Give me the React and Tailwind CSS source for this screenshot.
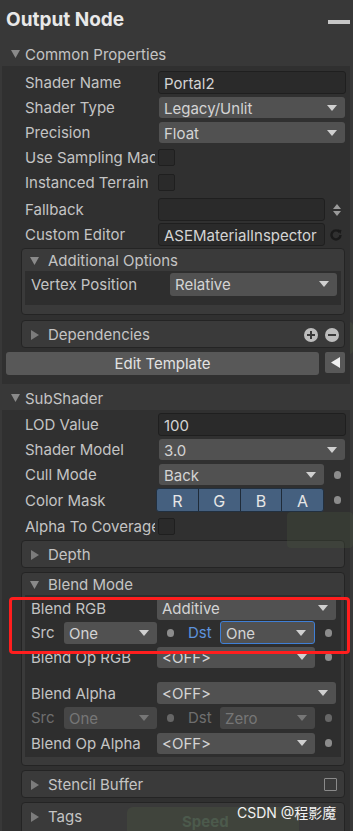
import React from "react";

const Tri = ({ dir = "down", className = "" }) => {
  if (dir === "down")
    return (
      <svg width="9" height="8" viewBox="0 0 9 8" className={className}>
        <path d="M0 0 H9 L4.5 8 Z" fill="#8a8a8a" />
      </svg>
    );
  return (
    <svg width="8" height="10" viewBox="0 0 8 10" className={className}>
      <path d="M0 0 L8 5 L0 10 Z" fill="#7c7c7c" />
    </svg>
  );
};

const Caret = ({ dim }) => (
  <svg width="10" height="6" viewBox="0 0 10 6" className="shrink-0">
    <path d="M0 0 H10 L5 6 Z" fill={dim ? "#777" : "#d0d0d0"} />
  </svg>
);

const Dot = ({ className = "" }) => (
  <div className={"h-[8px] w-[7px] rounded-full bg-[#8c8c8c] " + className} />
);

const Dropdown = ({ value, className = "", dim = false, focus = false }) => (
  <div
    className={
      "flex items-center justify-between rounded-[3px] pl-[5px] pr-[8px] " +
      (dim ? "bg-[#464646] text-[#767676] " : "bg-[#515151] text-[#d4d4d4] ") +
      (focus ? "border border-[#3f7fd6] pl-[4px] " : "") +
      className
    }
  >
    <span className="pt-[1px] leading-none">{value}</span>
    <Caret dim={dim} />
  </div>
);

const Input = ({ value = "", className = "" }) => (
  <div
    className={
      "flex items-center rounded-[3px] border border-[#1f1f1f] bg-[#2a2a2a] pl-[5px] text-[#d4d4d4] " +
      className
    }
  >
    <span className="pt-[2px] leading-none">{value}</span>
  </div>
);

const Check = () => (
  <div className="h-[17px] w-[17px] rounded-[2px] border border-[#1f1f1f] bg-[#2a2a2a]" />
);

const Row = ({ label, children, h = "h-[25px]" }) => (
  <div className={"flex items-center pl-[23px] " + h}>
    <div className="w-[130px] shrink-0 overflow-hidden whitespace-nowrap pt-[2px]">{label}</div>
    <div className="ml-[3px] flex items-center">{children}</div>
  </div>
);

const BRow = ({ label, children, h = "h-[24px]", lw = "w-[126px]", dim = false }) => (
  <div className={"flex items-center pl-[6px] " + h}>
    <div className={lw + " shrink-0 whitespace-nowrap pt-[2px] " + (dim ? "text-[#6e6e6e]" : "")}>
      {label}
    </div>
    {children}
  </div>
);

const Box = ({ title, open = false, children, className = "", right = null }) => (
  <div
    className={
      "ml-[19px] w-[324px] rounded-[4px] border border-[#242424] bg-[#3a3a3a] " + className
    }
  >
    <div className={"flex items-center pl-[8px] " + (open ? "h-[22px]" : "h-[26px]")}>
      {open ? <Tri dir="down" className="mt-[1px]" /> : <Tri dir="right" className="ml-[1px] mt-[1px]" />}
      <span className="ml-[9px] pt-[3px]">{title}</span>
      {right}
    </div>
    {children}
  </div>
);

export default function App() {
  return (
    <div className="relative h-[831px] w-[353px] overflow-hidden bg-[#383838] font-['Inter','Noto_Sans_CJK_SC',sans-serif] text-[15px] text-[#c4c4c4]">
      {/* faint graph behind */}
      <div className="absolute left-[292px] top-[322px] h-[32px] w-[61px] rounded-[4px] bg-[#4a5640] opacity-40" />
      <div className="absolute left-[287px] top-[512px] h-[36px] w-[66px] rounded-[4px] bg-[#4a5640] opacity-30" />
      <div className="absolute left-[127px] top-[807px] h-[30px] w-[172px] rounded-[6px] bg-[#4a5640] opacity-40" />

      {/* header */}
      <div className="flex h-[40px] items-center justify-between pl-[6px] pr-[3px]">
        <span className="pt-[1px] text-[19px] font-bold text-[#e8e8e8]">Output Node</span>
        <div className="mt-[4px] h-[4px] w-[22px] bg-[#c6c6c6]" />
      </div>

      <div className="flex h-[26px] items-center pl-[11px]">
        <Tri dir="down" className="mt-[2px]" />
        <span className="ml-[5px] pt-[4px]">Common Properties</span>
      </div>

      {/* common section */}
      <div className="relative ml-[2px] mr-[3px] bg-[#303030] pb-[9px] pt-[4px]">
        <Row label="Shader Name">
          <Input value="Portal2" className="h-[23px] w-[188px]" />
        </Row>
        <Row label="Shader Type">
          <Dropdown value="Legacy/Unlit" className="ml-[1px] h-[21px] w-[186px]" />
        </Row>
        <Row label="Precision">
          <Dropdown value="Float" className="ml-[1px] h-[21px] w-[186px]" />
        </Row>
        <Row label="Use Sampling Macros">
          <Check />
        </Row>
        <Row label="Instanced Terrain">
          <Check />
        </Row>
        <div className="h-[2px]" />
        <Row label="Fallback">
          <Input className="h-[23px] w-[167px]" />
          <svg width="8" height="12" viewBox="0 0 8 12" className="ml-[8px]">
            <path d="M0 5 L4 0 L8 5 Z M0 7 L4 12 L8 7 Z" fill="#9a9a9a" />
          </svg>
        </Row>
        <Row label="Custom Editor">
          <Input value="ASEMaterialInspector" className="h-[23px] w-[167px]" />
          <svg width="12" height="12" viewBox="0 0 12 12" className="ml-[5px]">
            <path d="M9.6 3.2 A4.5 4.5 0 1 0 10.5 6" fill="none" stroke="#1a1a1a" strokeWidth="2.4" />
            <path d="M7.5 0.5 L11.5 1 L10.5 5 Z" fill="#1a1a1a" />
          </svg>
        </Row>

        <Box title="Additional Options" open className="mt-[1px] pb-[9px]">
          <div className="mx-[3px] bg-[#2e2e2e] pb-[9px] pt-[1px]">
            <BRow label="Vertex Position" lw="w-[139px]" h="h-[24px]">
              <Dropdown value="Relative" className="h-[23px] w-[167px]" />
            </BRow>
          </div>
        </Box>

        <Box
          title="Dependencies"
          className="mt-[5px]"
          right={
            <div className="ml-auto mr-[5px] mt-[2px] flex gap-[7px]">
              <div className="relative h-[14px] w-[14px] rounded-full bg-[#bdbdbd]">
                <div className="absolute left-[3px] top-[6px] h-[2px] w-[8px] bg-[#3a3a3a]" />
                <div className="absolute left-[6px] top-[3px] h-[8px] w-[2px] bg-[#3a3a3a]" />
              </div>
              <div className="relative h-[14px] w-[14px] rounded-full bg-[#bdbdbd]">
                <div className="absolute left-[3px] top-[6px] h-[2px] w-[8px] bg-[#3a3a3a]" />
              </div>
            </div>
          }
        />

        <div className="ml-[4px] mt-[4px] flex items-start">
          <div className="flex h-[23px] w-[313px] items-center justify-center rounded-[3px] bg-[#585858] pt-[2px] text-[#e2e2e2]">
            Edit Template
          </div>
          <div className="ml-[6px] flex h-[21px] w-[20px] items-center justify-center rounded-[2px] bg-[#585858]">
            <svg width="9" height="11" viewBox="0 0 9 11">
              <path d="M9 0 V11 L0 5.5 Z" fill="#f0f0f0" />
            </svg>
          </div>
        </div>
      </div>

      <div className="flex h-[26px] items-center pl-[11px]">
        <Tri dir="down" className="mt-[2px]" />
        <span className="ml-[5px] pt-[4px]">SubShader</span>
      </div>

      {/* subshader section */}
      <div className="ml-[2px] mr-[3px] bg-[#303030] pt-[2px]">
        <Row label="LOD Value">
          <Input value="100" className="h-[23px] w-[188px]" />
        </Row>
        <Row label="Shader Model">
          <Dropdown value="3.0" className="ml-[1px] h-[21px] w-[186px]" />
        </Row>
        <Row label="Cull Mode">
          <Dropdown value="Back" className="ml-[1px] h-[21px] w-[165px]" />
          <Dot className="ml-[10px]" />
        </Row>
        <Row label="Color Mask" h="h-[26px]">
          <div className="-ml-[2px] flex h-[24px] w-[168px] overflow-hidden rounded-[3px] border border-[#22303f] bg-[#45607f] text-[16px] text-[#e6e6e6]">
            <div className="flex flex-1 items-center justify-center border-r border-[#1f2b38] pt-[2px]">R</div>
            <div className="flex flex-1 items-center justify-center border-r border-[#1f2b38] pt-[2px]">G</div>
            <div className="flex flex-1 items-center justify-center border-r border-[#1f2b38] pt-[2px]">B</div>
            <div className="flex flex-1 items-center justify-center pt-[2px]">A</div>
          </div>
          <Dot className="ml-[10px]" />
        </Row>
        <Row label="Alpha To Coverage" h="h-[26px]">
          <Check />
        </Row>

        <Box title="Depth" className="mt-[1px]" />

        <Box title="Blend Mode" open className="mt-[4px] pb-[8px]">
          <div className="mx-[3px] bg-[#2e2e2e] pb-[1px] pt-[1px]">
            <BRow label="Blend RGB">
              <Dropdown value="Additive" className="h-[23px] w-[179px]" />
            </BRow>
            <BRow label="Src" lw="w-[33px]" h="h-[25px]">
              <Dropdown value="One" className="h-[22px] w-[93px]" />
              <Dot className="ml-[10px]" />
              <span className="ml-[14px] w-[32px] pt-[2px] text-[#5d92dc]">Dst</span>
              <Dropdown value="One" focus className="h-[23px] w-[95px]" />
              <Dot className="ml-[10px]" />
            </BRow>
            <BRow label="Blend Op RGB">
              <Dropdown value="<OFF>" className="h-[21px] w-[158px]" />
              <Dot className="ml-[10px]" />
            </BRow>
            <div className="h-[12px]" />
            <BRow label="Blend Alpha">
              <Dropdown value="<OFF>" className="h-[22px] w-[179px]" />
            </BRow>
            <BRow label="Src" lw="w-[33px]" h="h-[25px]" dim>
              <Dropdown value="One" dim className="h-[22px] w-[93px]" />
              <Dot className="ml-[10px] opacity-60" />
              <span className="ml-[14px] w-[32px] pt-[2px] text-[#6e6e6e]">Dst</span>
              <Dropdown value="Zero" dim className="h-[22px] w-[95px]" />
              <Dot className="ml-[10px] opacity-60" />
            </BRow>
            <BRow label="Blend Op Alpha" h="h-[26px]">
              <Dropdown value="<OFF>" className="h-[21px] w-[158px]" />
              <Dot className="ml-[10px]" />
            </BRow>
          </div>
        </Box>

        <Box
          title="Stencil Buffer"
          className="mt-[4px]"
          right={
            <div className="ml-auto mr-[7px] h-[13px] w-[13px] rounded-[1px] border-[1.5px] border-[#8a8a8a]" />
          }
        />
        <Box title="Tags" className="mt-[4px] h-[40px]" />
      </div>

      {/* faint background text */}
      <div className="pointer-events-none absolute left-[182px] top-[811px] text-[15px] font-bold text-[#4c5a4c]">Speed</div>

      {/* red highlight */}
      <div className="pointer-events-none absolute left-[9px] top-[597px] h-[57px] w-[341px] rounded-[4px] border-[3px] border-[#ff1e1e]" />

      {/* watermark */}
      <div className="pointer-events-none absolute left-[237px] top-[802px] text-[14px] text-[#f2f2f2]">
        CSDN @程影魔
      </div>
    </div>
  );
}
